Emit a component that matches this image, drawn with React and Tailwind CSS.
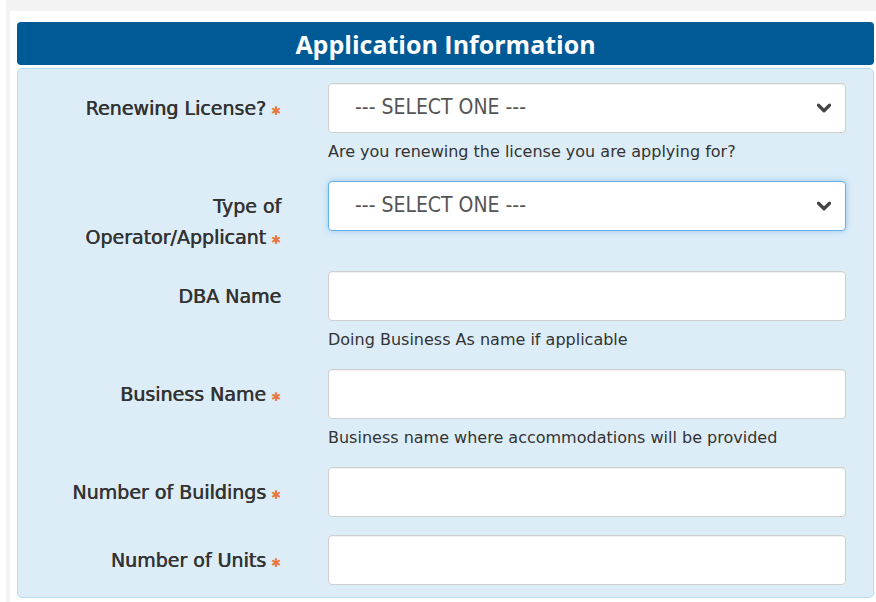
import { ChevronDown } from 'lucide-react';

const fields = [
  { label: ['Renewing License?'], required: true, kind: 'select', help: 'Are you renewing the license you are applying for?' },
  { label: ['Type of', 'Operator/Applicant'], required: true, kind: 'select', focused: true },
  { label: ['DBA Name'], required: false, kind: 'text', help: 'Doing Business As name if applicable' },
  { label: ['Business Name'], required: true, kind: 'text', help: 'Business name where accommodations will be provided' },
  { label: ['Number of Buildings'], required: true, kind: 'text' },
  { label: ['Number of Units'], required: true, kind: 'text' },
];

function Asterisk() {
  return <span className="ml-[5px] inline-block text-[12px] leading-none text-[#e8763a] [text-shadow:none]">✱</span>;
}

function FieldLabel({ lines, required }) {
  return (
    <div
      className="w-[263px] shrink-0 pt-[10px] text-right text-[19px] leading-[31px] text-[#333] [text-shadow:0.6px_0_0_#333]"
      style={{ fontFamily: '"DejaVu Sans", sans-serif' }}
    >
      {lines.map((line, i) => (
        <div key={i} className="h-[31px]">
          {line}
          {required && i === lines.length - 1 && <Asterisk />}
        </div>
      ))}
    </div>
  );
}

function SelectBox({ focused }) {
  return (
    <div
      className={
        'flex h-[50px] items-center justify-between rounded-[4px] border bg-white pl-[26px] pr-[10px] ' +
        (focused
          ? 'border-[#66afe9] shadow-[0_0_6px_rgba(102,175,233,0.6)]'
          : 'border-[#cfcfcf] shadow-[inset_0_1px_1px_rgba(0,0,0,0.06)]')
      }
    >
      <span className="text-[21px] text-[#555]">--- SELECT ONE ---</span>
      <ChevronDown size={22} strokeWidth={3.5} className="text-[#444]" />
    </div>
  );
}

function TextBox() {
  return (
    <div className="h-[50px] rounded-[4px] border border-[#cfcfcf] bg-white shadow-[inset_0_1px_1px_rgba(0,0,0,0.06)]" />
  );
}

export default function App() {
  return (
    <div className="min-h-screen bg-white pl-[6px]" style={{ fontFamily: '"DejaVu Sans Condensed", "DejaVu Sans", sans-serif' }}>
      <div className="bg-[#f3f3f3] pl-[4px] pt-[11px]">
        <div className="bg-white pl-[7px] pr-[2px] pt-[11px] pb-[4px]">
          <div className="flex h-[43px] items-center justify-center rounded-[4px] bg-[#005a96]">
            <h2 className="pt-[2px] text-[25px] font-bold text-white" style={{ fontFamily: '"Open Sans", sans-serif' }}>
              Application Information
            </h2>
          </div>
          <div className="mt-[3px] rounded-[5px] border border-[#b7dbf3] bg-[#dcedf8] pb-[12px] pr-[27px] pt-[14px]">
            {fields.map((f, i) => (
              <div key={i} className={'flex gap-[47px] ' + (i < fields.length - 1 ? 'mb-[18px]' : '')}>
                <FieldLabel lines={f.label} required={f.required} />
                <div className="flex-1">
                  {f.kind === 'select' ? <SelectBox focused={f.focused} /> : <TextBox />}
                  {f.help && (
                    <div className="mt-[8px] text-[16px] leading-[22px] text-[#333]" style={{ fontFamily: '"DejaVu Sans", sans-serif' }}>
                      {f.help}
                    </div>
                  )}
                </div>
              </div>
            ))}
          </div>
        </div>
      </div>
    </div>
  );
}
